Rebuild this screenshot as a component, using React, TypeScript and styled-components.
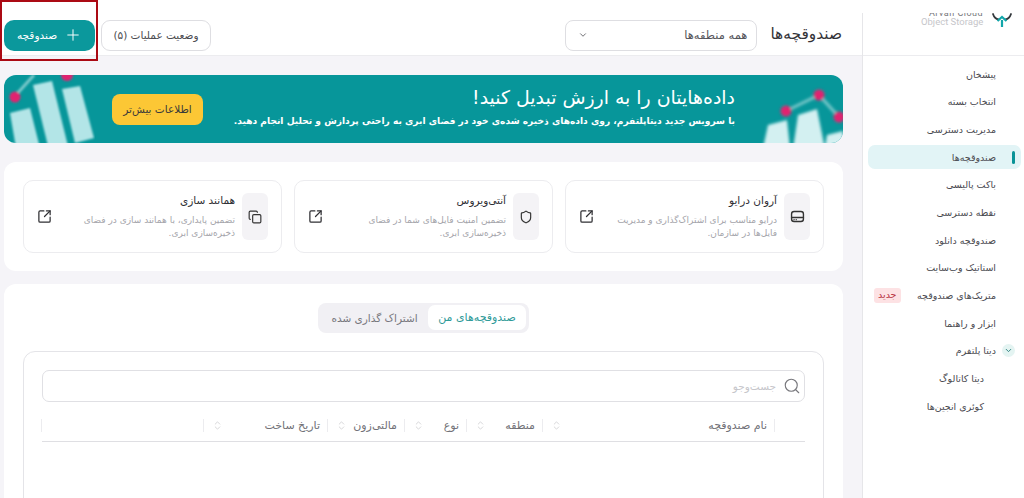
import React from "react";
import styled, { createGlobalStyle } from "styled-components";
import {
  ChevronDown,
  ChevronsUpDown,
  Copy,
  Plus,
  Search,
  Shield,
  SquareArrowOutUpRight,
} from "lucide-react";

const GlobalStyle = createGlobalStyle`
  html, body {
    margin: 0;
    height: 498px;
    overflow: hidden;
    background: #fff;
  }
  body, button, input {
    font-family: "DejaVu Sans", "Noto Sans", sans-serif;
  }
  * { box-sizing: border-box; }
`;

const Page = styled.div`
  position: relative;
  display: grid;
  grid-template-columns: 162px 862px;
  width: 1024px;
  height: 498px;
  overflow: hidden;
`;

const Highlight = styled.div`
  position: absolute;
  left: 0;
  top: 0;
  width: 98px;
  height: 61px;
  border: 2.5px solid #ab0a14;
  pointer-events: none;
`;

/* sidebar */
const Sidebar = styled.aside`
  padding-top: 13px;
  background: #fff;
  height: 498px;
`;

const SidebarInner = styled.div`
  height: 100%;
  border-left: 1px solid #e6e6e9;
`;

const Brand = styled.div`
  display: flex;
  height: 43px;
  overflow: hidden;
  padding: 0 12px 0 0;
  gap: 8px;
  border-bottom: 1px solid #ececef;
`;

const BrandText = styled.div`
  direction: ltr;
  flex: none;
  width: 63px;
  margin-top: -2px;
  font-family: "Roboto", sans-serif;
  text-align: left;
  color: #c6c6ca;
  font-size: 9.5px;
  line-height: 12px;
  white-space: nowrap;
`;

const BrandTop = styled.div`
  color: #77777c;
  padding-left: 8px;
  font-size: 9px;
  line-height: 5px;
  letter-spacing: 0.5px;
`;

const NavList = styled.nav`
  display: flex;
  flex-direction: column;
  gap: 3.7px;
  padding: 6px 3px 0 5px;
`;

const NavItem = styled.div<{ $active?: boolean; $sub?: boolean }>`
  display: flex;
  align-items: center;
  height: 24px;
  border-radius: 7px;
  padding-left: 6px;
  padding-right: ${(p) => (p.$sub ? 37 : 0)}px;
  background: ${(p) => (p.$active ? "#e2f4f6" : "transparent")};
  color: #4a4a50;
  font-size: 9.5px;
  white-space: nowrap;
`;

const NavLead = styled.span`
  display: flex;
  align-items: center;
  width: 25px;
  padding-right: 6px;
  flex: none;
`;

const ActiveBar = styled.span`
  width: 3px;
  height: 13px;
  border-radius: 2px;
  background: #0a9397;
`;

const ExpandDot = styled.span`
  display: flex;
  align-items: center;
  justify-content: center;
  width: 13px;
  height: 13px;
  border-radius: 50%;
  background: #e4f4f2;
  color: #2b7f7d;
`;

const NewBadge = styled.span`
  margin-right: auto;
  padding: 0 4px;
  height: 15px;
  line-height: 14px;
  border-radius: 3px;
  background: #fde2e4;
  color: #b8313f;
  font-size: 9.5px;
`;

/* main column */
const Main = styled.main`
  background: #f5f4f8;
  height: 498px;
  padding: 0 19px 0 4px;
  overflow: hidden;
`;

const Header = styled.header`
  display: flex;
  align-items: center;
  gap: 13px;
  height: 56px;
  margin: 0 -19px 0 -4px;
  padding: 15px 20px 0 4px;
  background: #fff;
  border-bottom: 1px solid #ececef;
`;

const PageTitle = styled.h1`
  margin: 0 0 3px;
  color: #333338;
  font-size: 15.4px;
  font-weight: 500;
  white-space: nowrap;
`;

const RegionSelect = styled.div`
  display: flex;
  align-items: center;
  justify-content: space-between;
  width: 192px;
  height: 31px;
  padding: 0 9px 0 12px;
  border: 1px solid #dedee2;
  border-radius: 8px;
  color: #55555b;
  font-size: 11.5px;
`;

const HeaderActions = styled.div`
  display: flex;
  align-items: center;
  gap: 6px;
  margin-right: auto;
`;

const StatusButton = styled.button`
  width: 110px;
  height: 31px;
  padding: 0;
  border: 1px solid #dedee2;
  border-radius: 9px;
  background: #fff;
  color: #4b4b50;
  font-size: 10.5px;
`;

const AddButton = styled.button`
  display: flex;
  align-items: center;
  justify-content: center;
  gap: 7px;
  width: 91px;
  height: 31px;
  padding: 0;
  border: 0;
  border-radius: 10px;
  background: #0b989c;
  color: #fff;
  font-size: 10.5px;
`;

const Banner = styled.section`
  display: flex;
  align-items: stretch;
  height: 68px;
  margin-top: 19px;
  border-radius: 12px;
  overflow: hidden;
  background: #07969a;
  color: #fff;
`;

const BannerText = styled.div`
  flex: 1;
  padding-top: 10px;
`;

const BannerTitle = styled.h2`
  margin: 0;
  font-size: 18.9px;
  line-height: 25px;
  font-weight: 500;
`;

const BannerSub = styled.p`
  margin: 3px 0 0;
  font-size: 9.1px;
  font-weight: 700;
  line-height: 16px;
  white-space: nowrap;
`;

const MoreButton = styled.button`
  align-self: center;
  flex: none;
  width: 91px;
  height: 31px;
  margin-left: 17px;
  padding: 0;
  border: 0;
  border-radius: 8px;
  background: #fcc735;
  color: #3a3a3a;
  font-size: 10.5px;
`;

const CardsPanel = styled.section`
  display: grid;
  grid-template-columns: repeat(3, 259px);
  gap: 12px;
  height: 109px;
  margin-top: 19px;
  padding: 18px 19px;
  border-radius: 12px;
  background: #fff;
`;

const Card = styled.article`
  display: flex;
  align-items: center;
  gap: 7px;
  height: 73px;
  padding: 0 13px;
  border: 1px solid #ececef;
  border-radius: 10px;
`;

const CardIcon = styled.div`
  display: flex;
  align-items: center;
  justify-content: center;
  flex: none;
  width: 26px;
  height: 47px;
  border-radius: 6px;
  background: #f4f3f6;
  color: #333;
`;

const CardBody = styled.div`
  flex: 1;
`;

const CardTitle = styled.h3`
  margin: 0 0 7px;
  color: #2f2f34;
  font-size: 10.5px;
  line-height: 14px;
  font-weight: 500;
`;

const CardText = styled.p`
  margin: 0;
  width: 170px;
  color: #a4a4aa;
  font-size: 9px;
  line-height: 13px;
`;

const OpenIcon = styled(SquareArrowOutUpRight)`
  flex: none;
  color: #2f2f33;
`;

const BucketsPanel = styled.section`
  height: 240px;
  margin-top: 13px;
  padding: 19px 19px 0;
  border-radius: 12px 12px 0 0;
  background: #fff;
`;

const Tabs = styled.div`
  display: flex;
  width: 211px;
  height: 30px;
  margin: 0 auto 18px;
  padding: 2px 3px 3px;
  border-radius: 8px;
  background: #f1f0f4;
`;

const Tab = styled.div<{ $active?: boolean }>`
  display: flex;
  align-items: center;
  justify-content: center;
  flex: ${(p) => (p.$active ? "0 0 98px" : "1")};
  border-radius: 7px;
  background: ${(p) => (p.$active ? "#fff" : "transparent")};
  color: ${(p) => (p.$active ? "#2f9a98" : "#77777d")};
  font-size: ${(p) => (p.$active ? 11 : 10.5)}px;
  white-space: nowrap;
`;

const TableBox = styled.div`
  width: 801px;
  height: 180px;
  padding: 18px 18px 0;
  border: 1px solid #e4e4e8;
  border-radius: 12px;
`;

const SearchBar = styled.div`
  display: flex;
  align-items: center;
  gap: 7px;
  height: 32px;
  padding: 0 3px;
  border: 1px solid #e0e0e4;
  border-radius: 7px;
  color: #77777c;
`;

const SearchHint = styled.span`
  color: #c6c6cb;
  font-size: 10.5px;
`;

const HeadRow = styled.div`
  display: flex;
  align-items: center;
  height: 40px;
  padding: 8px 30px 0 0;
  border-bottom: 1px solid #dfdfe3;
`;

const HeadCell = styled.div<{ $w: number }>`
  display: flex;
  align-items: center;
  flex: 0 0 ${(p) => p.$w}px;
  height: 13px;
  padding-left: 8px;
  border-right: 1px solid #ececef;
  color: #717177;
  font-size: 11px;
  white-space: nowrap;
`;

const HeadLabel = styled.span`
  padding-right: 7px;
`;

const SortIcon = styled(ChevronsUpDown)`
  margin-right: auto;
  color: #c4c4c8;
`;

const HeadEdge = styled.div`
  flex: none;
  width: 1px;
  height: 13px;
  background: #ececef;
`;

/* drawings */
const BarsArt = styled.svg`
  flex: none;
  display: block;
`;

function BannerArtRight() {
  return (
    <BarsArt width="108" height="68" viewBox="0 0 108 68">
      <defs>
        <filter id="blurRight"><feGaussianBlur stdDeviation="1.4" /></filter>
      </defs>
      <g filter="url(#blurRight)">
        <path d="M51 36L84 20L104 42" stroke="#7cc9cb" strokeWidth="3" fill="none" />
        <path d="M33 50l19-5l3 28H28z" fill="#d3f0f1" />
        <path d="M63 40l19-6l8 40H58z" fill="#d3f0f1" />
        <path d="M92 60l16-4v16H90z" fill="#d3f0f1" />
        <circle cx="51" cy="36" r="5.5" fill="#e0246f" />
        <circle cx="84" cy="20" r="5.5" fill="#e0246f" />
        <circle cx="104" cy="42" r="5.5" fill="#e0246f" />
      </g>
    </BarsArt>
  );
}

function BannerArtLeft() {
  return (
    <BarsArt width="91" height="68" viewBox="0 0 91 68">
      <defs>
        <filter id="blurLeft"><feGaussianBlur stdDeviation="1.3" /></filter>
      </defs>
      <g filter="url(#blurLeft)">
        <path d="M11 21L30 0" stroke="#7cc9cb" strokeWidth="3" fill="none" />
        <path d="M6 38l20-5l10 40H12z" fill="#b3e5e7" />
        <path d="M29 10l19-4l16 65H44z" fill="#b3e5e7" />
        <path d="M58 14l18-3l14 52l-19 5z" fill="#b3e5e7" />
        <circle cx="11" cy="22" r="5.5" fill="#e0246f" />
        <circle cx="63" cy="0" r="6" fill="#e0246f" />
      </g>
    </BarsArt>
  );
}

function BrandMark() {
  return (
    <svg width="20" height="16" viewBox="0 0 20 16" fill="none" style={{ flex: "none" }}>
      <path d="M1 1c1 3 3 5 5.500 5.500M19 1c-1 3-3 5-5.500 5.500" stroke="#33383c" strokeWidth="1.800" strokeLinecap="round" />
      <path d="M10 14V7M5.500 8L10 4l4.500 4" stroke="#12a6aa" strokeWidth="2.200" />
    </svg>
  );
}

function DriveIcon() {
  return (
    <svg width="15" height="15" viewBox="0 0 24 24" fill="none" stroke="currentColor" strokeWidth="2.2" strokeLinecap="round">
      <rect x="2.500" y="4" width="19" height="16" rx="4" />
      <path d="M2.500 13.500h19M6.500 17h.01M10 17h.01" />
    </svg>
  );
}

const navItems = [
  { label: "پیشخان" },
  { label: "انتخاب بسته" },
  { label: "مدیریت دسترسی" },
  { label: "صندوقچه‌ها", active: true },
  { label: "باکت پالیسی" },
  { label: "نقطه دسترسی" },
  { label: "صندوقچه دانلود" },
  { label: "استاتیک وب‌سایت" },
  { label: "متریک‌های صندوقچه", badge: "جدید" },
  { label: "ابزار و راهنما" },
  { label: "دیتا پلتفرم", expand: true },
  { label: "دیتا کاتالوگ", sub: true },
  { label: "کوئری انجین‌ها", sub: true },
];

const cards = [
  {
    title: "آروان درایو",
    text: "درایو مناسب برای اشتراک‌گذاری و مدیریت فایل‌ها در سازمان.",
    icon: <DriveIcon />,
  },
  {
    title: "آنتی‌ویروس",
    text: "تضمین امنیت فایل‌های شما در فضای ذخیره‌سازی ابری.",
    icon: <Shield size={14} strokeWidth={2} />,
  },
  {
    title: "همانند سازی",
    text: "تضمین پایداری، با همانند سازی در فضای ذخیره‌سازی ابری.",
    icon: <Copy size={14} strokeWidth={2} />,
  },
];

const columns = [
  { label: "نام صندوقچه", w: 232 },
  { label: "منطقه", w: 76 },
  { label: "نوع", w: 62 },
  { label: "مالتی‌زون", w: 77 },
  { label: "تاریخ ساخت", w: 124 },
];

export default function App() {
  return (
    <>
      <GlobalStyle />
      <Page dir="rtl">
        <Sidebar>
          <SidebarInner>
            <Brand>
              <BrandMark />
              <BrandText>
                <BrandTop>Arvan Cloud</BrandTop>
                Object Storage
              </BrandText>
            </Brand>
            <NavList>
              {navItems.map((item) => (
                <NavItem key={item.label} $active={item.active} $sub={item.sub}>
                  {!item.sub && (
                    <NavLead>
                      {item.active && <ActiveBar />}
                      {item.expand && (
                        <ExpandDot>
                          <ChevronDown size={9} strokeWidth={2.5} />
                        </ExpandDot>
                      )}
                    </NavLead>
                  )}
                  {item.label}
                  {item.badge && <NewBadge>{item.badge}</NewBadge>}
                </NavItem>
              ))}
            </NavList>
          </SidebarInner>
        </Sidebar>

        <Main>
          <Header>
            <PageTitle>صندوقچه‌ها</PageTitle>
            <RegionSelect>
              همه منطقه‌ها
              <ChevronDown size={10} strokeWidth={2} />
            </RegionSelect>
            <HeaderActions>
              <StatusButton>وضعیت عملیات (۵)</StatusButton>
              <AddButton>
                <Plus size={18} strokeWidth={1.3} />
                صندوقچه
              </AddButton>
            </HeaderActions>
          </Header>

          <Banner>
            <BannerArtRight />
            <BannerText>
              <BannerTitle>داده‌هایتان را به ارزش تبدیل کنید!</BannerTitle>
              <BannerSub>
                با سرویس جدید دیتاپلتفرم، روی داده‌های ذخیره شده‌ی خود در فضای ابری به راحتی پردازش و تحلیل انجام دهید.
              </BannerSub>
            </BannerText>
            <MoreButton>اطلاعات بیش‌تر</MoreButton>
            <BannerArtLeft />
          </Banner>

          <CardsPanel>
            {cards.map((card) => (
              <Card key={card.title}>
                <CardIcon>{card.icon}</CardIcon>
                <CardBody>
                  <CardTitle>{card.title}</CardTitle>
                  <CardText>{card.text}</CardText>
                </CardBody>
                <OpenIcon size={15} strokeWidth={2} />
              </Card>
            ))}
          </CardsPanel>

          <BucketsPanel>
            <Tabs>
              <Tab $active>صندوقچه‌های من</Tab>
              <Tab>اشتراک گذاری شده</Tab>
            </Tabs>
            <TableBox>
              <SearchBar>
                <Search size={18} strokeWidth={1.5} />
                <SearchHint>جست‌وجو</SearchHint>
              </SearchBar>
              <HeadRow>
                {columns.map((col) => (
                  <HeadCell key={col.label} $w={col.w}>
                    <HeadLabel>{col.label}</HeadLabel>
                    <SortIcon size={11} strokeWidth={1.5} />
                  </HeadCell>
                ))}
                <HeadCell $w={162} />
                <HeadEdge />
              </HeadRow>
            </TableBox>
          </BucketsPanel>
        </Main>
        <Highlight />
      </Page>
    </>
  );
}
